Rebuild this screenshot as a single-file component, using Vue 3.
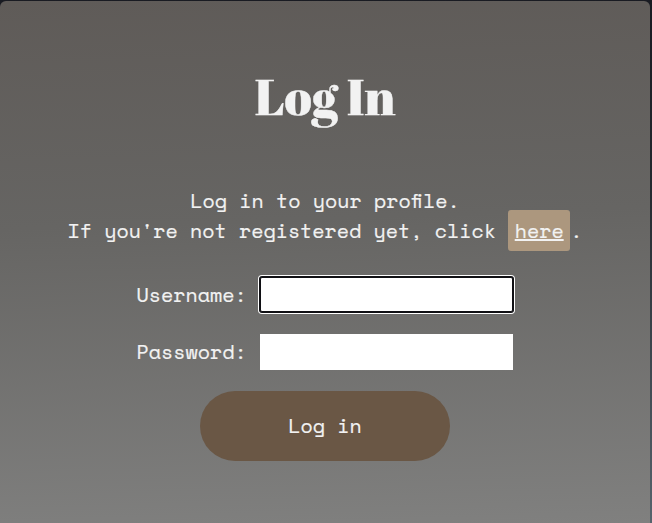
<script setup>
import { ref } from 'vue'

const username = ref('')
const password = ref('')
</script>

<template>
  <div class="page">
    <main class="card">
      <h1>Log In</h1>
      <p class="intro">
        Log in to your profile.<br />
        If you're not registered yet, click <a class="link" href="#">here</a>.
      </p>
      <form @submit.prevent>
        <div class="field">
          <label for="username">Username:</label>
          <input id="username" v-model="username" class="focused" type="text" />
        </div>
        <div class="field">
          <label for="password">Password:</label>
          <input id="password" v-model="password" type="password" />
        </div>
        <button type="submit">Log in</button>
      </form>
    </main>
  </div>
</template>

<style>
body {
  margin: 0;
  overflow: hidden;
}
</style>

<style scoped>
.page {
  box-sizing: border-box;
  height: 523px;
  padding: 1px 2px 0 0;
  background: linear-gradient(180deg, #191b22 0%, #24292f 35%, #56636c 100%);
}

.card {
  box-sizing: border-box;
  width: 650px;
  height: 522px;
  padding-top: 65px;
  border-radius: 6px 6px 0 0;
  background: linear-gradient(178deg, #5f5b58 0%, #666563 42%, #80807f 100%);
  color: #f2f2f2;
  font-family: "Space Mono", "Liberation Mono", monospace;
  font-size: 20px;
  line-height: 30px;
  -webkit-text-stroke: 0.2px #f2f2f2;
}

h1 {
  margin: 0;
  font-family: "Abril Fatface", "Liberation Serif", serif;
  font-size: 50px;
  font-weight: 400;
  line-height: 60px;
  text-align: center;
  -webkit-text-stroke: 0.4px #f2f2f2;
}

.intro {
  margin: 60px 0 0;
  text-align: center;
  white-space: nowrap;
  font-feature-settings: "liga" 1, "dlig" 1, "clig" 1;
}

.link {
  padding: 6px 6.5px;
  border-radius: 3px;
  background: #ac977e;
  color: #f2f2f2;
  text-decoration-thickness: 2px;
}

form {
  display: flex;
  flex-direction: column;
  align-items: center;
  padding-top: 31px;
}

.field {
  display: flex;
  align-items: center;
  gap: 13.8px;
  margin-bottom: 21px;
}

.field input {
  box-sizing: border-box;
  width: 253px;
  height: 36px;
  padding: 0 8px;
  border: 0;
  border-radius: 0;
  outline: 0;
  background: #fff;
  font: inherit;
}

.field .focused {
  height: 35px;
  margin: 0 0 1px;
  border: 1px solid #101014;
  border-radius: 2px;
  box-shadow: 0 0 0 1px #101014, 0 0 0 2px #fff;
}

button {
  width: 250px;
  height: 70px;
  padding: 0;
  border: 0;
  border-radius: 35px;
  background: #6a5745;
  color: #f2f2f2;
  font: inherit;
  -webkit-text-stroke: 0.2px #f2f2f2;
}
</style>
